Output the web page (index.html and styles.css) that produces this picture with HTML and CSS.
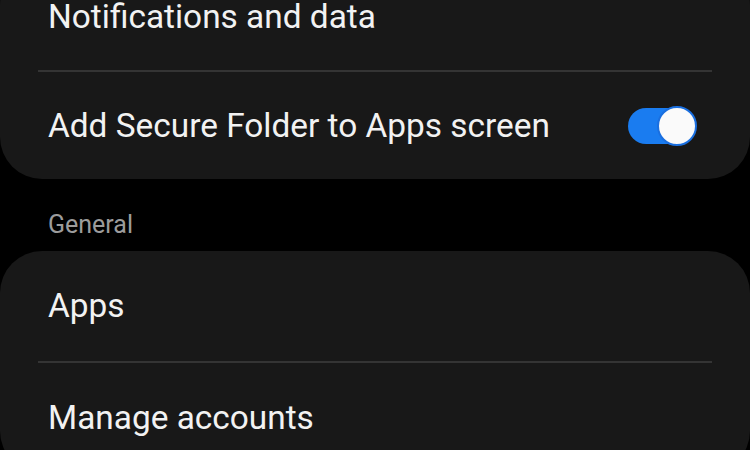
FILE: index.html
```html
<!DOCTYPE html>
<html>
<head>
<meta charset="utf-8">
<link rel="stylesheet" href="styles.css">
</head>
<body>
<div class="screen">
  <div class="card card-top">
    <div class="row"><span class="label">Notifications and data</span></div>
    <div class="sep"></div>
    <div class="row">
      <span class="label">Add Secure Folder to Apps screen</span>
      <span class="switch"><span class="thumb"></span></span>
    </div>
  </div>
  <div class="section">General</div>
  <div class="card">
    <div class="row row-tall"><span class="label">Apps</span></div>
    <div class="sep"></div>
    <div class="row row-tall"><span class="label">Manage accounts</span></div>
  </div>
</div>
</body>
</html>
```
FILE: styles.css
```css
html, body {
  margin: 0;
  padding: 0;
  background: #000;
}
body {
  width: 750px;
  height: 450px;
  overflow: hidden;
  font-family: Roboto, "Noto Sans", sans-serif;
}
.screen {
  margin-top: -37px;
}
.card {
  background: #181818;
  border-radius: 42px;
}
.row {
  height: 107px;
  display: flex;
  align-items: center;
  justify-content: space-between;
  padding: 0 60px 0 48px;
}
.row-tall {
  height: 110px;
}
.label {
  color: #f2f2f2;
  font-size: 33.4px;
  line-height: 40px;
}
.sep {
  height: 2px;
  background: #343434;
  margin: 0 38px;
}
.section {
  color: #9c9c9c;
  font-size: 25px;
  padding: 31px 48px 0;
  height: 41px;
}
.switch {
  position: relative;
  width: 62px;
  height: 36px;
  border-radius: 18px;
  background: #1a7cf0;
  display: flex;
  align-items: center;
  justify-content: flex-end;
}
.thumb {
  width: 36px;
  height: 36px;
  border-radius: 50%;
  background: #fafafa;
  border: 2px solid #1a6fe0;
  margin-right: -7px;
}
```
